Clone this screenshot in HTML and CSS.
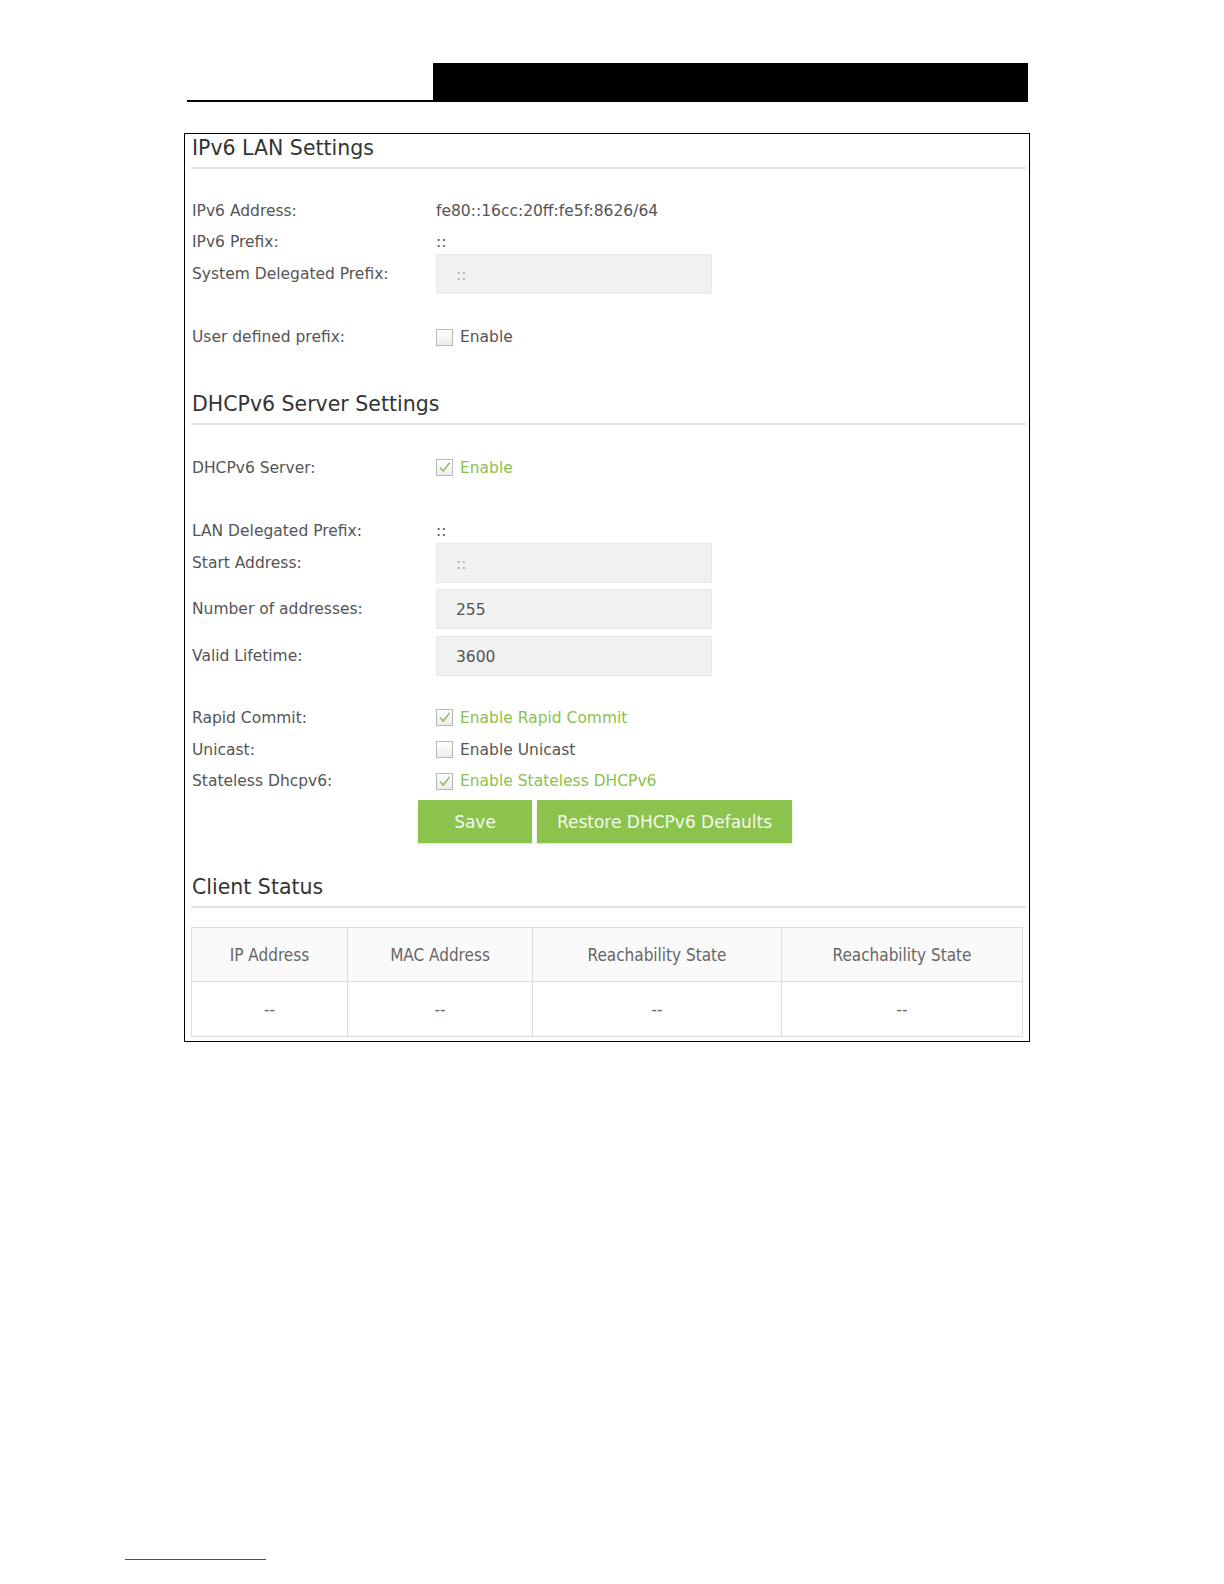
FILE: index.html
```html
<!DOCTYPE html>
<html lang="en">
  <head>
    <meta charset="UTF-8" />
    <meta name="viewport" content="width=device-width, initial-scale=1.0" />
    <title>IPv6 LAN Settings</title>
    <link rel="stylesheet" href="styles.css">
  </head>
  <body>
    <!-- Page header -->
    <div class="page-head">
      <div class="head-rule"></div>
      <div class="head-bar"></div>
    </div>

    <div class="frame">
      <!-- IPv6 LAN -->
      <h2 class="section-title">IPv6 LAN Settings</h2>
      <div class="row first">
        <span class="label">IPv6 Address:</span>
        <span class="value">fe80::16cc:20ff:fe5f:8626/64</span>
      </div>
      <div class="row">
        <span class="label">IPv6 Prefix:</span>
        <span class="value">::</span>
      </div>
      <div class="row">
        <span class="label">System Delegated Prefix:</span>
        <span class="field muted">::</span>
      </div>
      <div class="row gap-31">
        <span class="label">User defined prefix:</span>
        <label class="check"><span class="box"></span>Enable</label>
      </div>

      <!-- DHCPv6 -->
      <h2 class="section-title gap-37">DHCPv6 Server Settings</h2>
      <div class="row gap-27">
        <span class="label">DHCPv6 Server:</span>
        <label class="check on"><span class="box"><svg viewBox="0 0 17 17"><path d="M3.5 8.5 L7 12.5 L14.5 3" /></svg></span>Enable</label>
      </div>
      <div class="row gap-32">
        <span class="label">LAN Delegated Prefix:</span>
        <span class="value">::</span>
      </div>
      <div class="row">
        <span class="label">Start Address:</span>
        <span class="field muted">::</span>
      </div>
      <div class="row gap-14">
        <span class="label">Number of addresses:</span>
        <span class="field">255</span>
      </div>
      <div class="row gap-15">
        <span class="label">Valid Lifetime:</span>
        <span class="field">3600</span>
      </div>
      <div class="row gap-30">
        <span class="label">Rapid Commit:</span>
        <label class="check on"><span class="box"><svg viewBox="0 0 17 17"><path d="M3.5 8.5 L7 12.5 L14.5 3" /></svg></span>Enable Rapid Commit</label>
      </div>
      <div class="row">
        <span class="label">Unicast:</span>
        <label class="check"><span class="box"></span>Enable Unicast</label>
      </div>
      <div class="row">
        <span class="label">Stateless Dhcpv6:</span>
        <label class="check on"><span class="box"><svg viewBox="0 0 17 17"><path d="M3.5 8.5 L7 12.5 L14.5 3" /></svg></span>Enable Stateless DHCPv6</label>
      </div>
      <div class="buttons">
        <button class="btn save">Save</button>
        <button class="btn restore">Restore DHCPv6 Defaults</button>
      </div>

      <!-- Clients -->
      <h2 class="section-title gap-30">Client Status</h2>
      <table class="clients">
        <tr>
          <th class="c1">IP Address</th>
          <th class="c2">MAC Address</th>
          <th class="c3">Reachability State</th>
          <th>Reachability State</th>
        </tr>
        <tr>
          <td>--</td>
          <td>--</td>
          <td>--</td>
          <td>--</td>
        </tr>
      </table>
    </div>

    <div class="foot-rule"></div>
  </body>
</html>
```

FILE: styles.css
```css
body {
  margin: 0;
  padding: 0;
  background-color: #fff;
  font-family: "DejaVu Sans", Verdana, sans-serif;
  color: #555;
}

.page-head {
  display: flex;
  padding: 63px 0 0 187px;
  width: 841px;
  height: 39px;
}

.head-rule {
  width: 246px;
  height: 37px;
  border-bottom: 2px solid #000;
}

.head-bar {
  flex: 1;
  background-color: #000;
}

.frame {
  margin: 31px 0 0 184px;
  width: 835px;
  height: 903px;
  border: 1px solid #000;
  padding: 0 3px 4px 6px;
  display: flex;
  flex-direction: column;
}

.section-title {
  margin: 0;
  padding: 1px 0 6px 1px;
  line-height: 26px;
  font-size: 20.5px;
  font-weight: normal;
  color: #333;
  border-bottom: 2px solid #e2e2e2;
}

.row {
  display: flex;
  align-items: center;
  height: 32px;
  font-size: 15.5px;
}

.row.first {
  margin-top: 26px;
}

.gap-14 { margin-top: 14px; }
.gap-15 { margin-top: 15px; }
.gap-27 { margin-top: 27px; }
.gap-30 { margin-top: 30px; }
.gap-31 { margin-top: 31px; }
.gap-32 { margin-top: 32px; }
.gap-37 { margin-top: 37px; }

.label {
  width: 244px;
  padding-left: 1px;
  color: #555;
}

.value {
  color: #555;
}

.field {
  box-sizing: border-box;
  width: 276px;
  height: 40px;
  margin: -4px 0;
  padding: 6px 0 0 19px;
  line-height: 28px;
  background-color: #f1f1f1;
  border: 1px solid #e9e9e9;
  color: #555;
}

.field.muted {
  color: #aaa;
}

.check {
  display: flex;
  align-items: center;
  color: #555;
}

.check.on {
  color: #8cc14c;
}

.box {
  box-sizing: border-box;
  width: 17px;
  height: 17px;
  margin-right: 7px;
  border: 1px solid #b8b8b8;
  background: linear-gradient(#fff, #ededed);
}

.box svg {
  display: block;
  width: 15px;
  height: 15px;
}

.box path {
  fill: none;
  stroke: #8fb86a;
  stroke-width: 1.6;
}

.buttons {
  display: flex;
  gap: 5px;
  margin: 3px 0 0 227px;
}

.btn {
  height: 43px;
  border: none;
  border-radius: 0;
  background-color: #8cc34d;
  color: #f3f9ec;
  font-family: "DejaVu Sans", Verdana, sans-serif;
  font-size: 17px;
  cursor: pointer;
  box-shadow: 0 1px 2px rgba(0, 0, 0, 0.15);
}

.save {
  width: 114px;
}

.restore {
  width: 255px;
}

.clients {
  margin-top: 19px;
  width: 832px;
  border-collapse: collapse;
  font-family: "DejaVu Sans Condensed", "DejaVu Sans", sans-serif;
  font-stretch: condensed;
  font-size: 17px;
  color: #666;
}

.clients th,
.clients td {
  border: 1px solid #dcdcdc;
  text-align: center;
  font-weight: normal;
}

.clients th {
  height: 51px;
  background-color: #fafafa;
}

.clients td {
  height: 52px;
}

.c1 { width: 153px; }
.c2 { width: 182px; }
.c3 { width: 246px; }

.foot-rule {
  margin: 517px 0 0 125px;
  width: 141px;
  border-top: 1px solid #3a3aff;
}
```
